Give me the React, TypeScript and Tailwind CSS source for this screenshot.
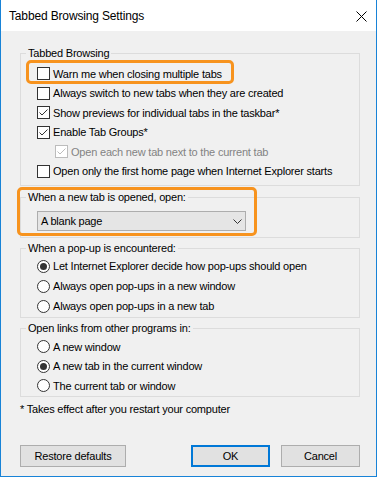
import React from "react";

type Item = { label: string; checked?: boolean; disabled?: boolean; indent?: boolean };

const tabItems: Item[] = [
  { label: "Warn me when closing multiple tabs" },
  { label: "Always switch to new tabs when they are created" },
  { label: "Show previews for individual tabs in the taskbar*", checked: true },
  { label: "Enable Tab Groups*", checked: true },
  { label: "Open each new tab next to the current tab", checked: true, disabled: true, indent: true },
  { label: "Open only the first home page when Internet Explorer starts" },
];

const popupItems: Item[] = [
  { label: "Let Internet Explorer decide how pop-ups should open", checked: true },
  { label: "Always open pop-ups in a new window" },
  { label: "Always open pop-ups in a new tab" },
];

const linkItems: Item[] = [
  { label: "A new window" },
  { label: "A new tab in the current window", checked: true },
  { label: "The current tab or window" },
];

function Checkbox({ checked, disabled }: { checked?: boolean; disabled?: boolean }) {
  return (
    <span
      className={`flex h-[13px] w-[13px] shrink-0 items-center justify-center border bg-white ${
        disabled ? "border-[#bcbcbc]" : "border-[#333333]"
      }`}
    >
      {checked && (
        <svg width="11" height="11" viewBox="0 0 11 11">
          <polyline
            points="1.5,5.5 4,8 9.5,2.5"
            fill="none"
            stroke={disabled ? "#bcbcbc" : "#333333"}
            strokeWidth="1"
          />
        </svg>
      )}
    </span>
  );
}

function Radio({ checked }: { checked?: boolean }) {
  return (
    <span className="flex h-[13px] w-[13px] shrink-0 items-center justify-center rounded-full border border-[#333333] bg-white">
      {checked && <span className="h-[7px] w-[7px] rounded-full bg-[#333333]" />}
    </span>
  );
}

// group box like the win32 one: legend sits on the top border
function Group({ title, children, className }: { title: string; children: React.ReactNode; className?: string }) {
  return (
    <fieldset className={`border border-[#dcdcdc] ${className ?? ""}`}>
      <legend className="ml-[5px] px-[2px] leading-[14px]">{title}</legend>
      {children}
    </fieldset>
  );
}

export default function App() {
  return (
    <div
      className="flex h-[477px] w-[377px] flex-col border-x border-b border-[#1883d7] bg-[#f0f0f0] text-[11px] tracking-[-0.2px] text-black"
      style={{ fontFamily: '"Liberation Sans", Arial, sans-serif' }}
    >
      {/* title bar */}
      <div className="flex h-[31px] shrink-0 items-center justify-between bg-white pl-[8px] pr-[9px] pt-[1px]">
        <span className="text-[12px] tracking-[-0.15px]">Tabbed Browsing Settings</span>
        <svg width="11" height="11" viewBox="0 0 11 11">
          <path d="M0.5 0.5 L10.5 10.5 M10.5 0.5 L0.5 10.5" stroke="#000" strokeWidth="1" />
        </svg>
      </div>

      <div className="flex flex-1 flex-col pl-[19px] pr-[16px] pt-[15px] pb-[9px]">
        <div className="relative">
          <Group title="Tabbed Browsing">
            <div className="pl-[16px] pt-[4px] pb-[4px]">
              {tabItems.map((it) => (
                <div
                  key={it.label}
                  className={`flex h-[19.5px] items-center gap-[3px] ${it.indent ? "pl-[18px]" : ""} ${
                    it.disabled ? "text-[#838383]" : ""
                  }`}
                >
                  <Checkbox checked={it.checked} disabled={it.disabled} />
                  <span className="leading-[14px] whitespace-nowrap">{it.label}</span>
                </div>
              ))}
            </div>
          </Group>
          <span className="pointer-events-none absolute left-[6px] top-[14px] h-[24px] w-[208px] rounded-[5px] border-[3px] border-[#f7931e]" />
        </div>

        <div className="relative mt-[4px]">
          <Group title="When a new tab is opened, open:">
            <div className="pl-[16px] pt-[7px] pb-[6px]">
              <div className="flex h-[20px] w-[209px] items-center justify-between border border-[#adadad] bg-[#e5e5e5] pl-[3px] pr-[3px]">
                <span className="leading-[14px]">A blank page</span>
                <svg width="9" height="5" viewBox="0 0 9 5">
                  <polyline points="0.5,0.5 4.5,4.5 8.5,0.5" fill="none" stroke="#333333" strokeWidth="1" />
                </svg>
              </div>
            </div>
          </Group>
          <span className="pointer-events-none absolute -left-[3px] -top-[3px] h-[49px] w-[240px] rounded-[5px] border-[3px] border-[#f7931e]" />
        </div>

        <Group title="When a pop-up is encountered:" className="mt-[3px]">
          <div className="pl-[16px] pt-[1px] pb-[1px]">
            {popupItems.map((it) => (
              <div key={it.label} className="flex h-[20px] items-center gap-[3px]">
                <Radio checked={it.checked} />
                <span className="leading-[14px] whitespace-nowrap">{it.label}</span>
              </div>
            ))}
          </div>
        </Group>

        <Group title="Open links from other programs in:" className="mt-[3px]">
          <div className="pl-[16px] pt-[2px]">
            {linkItems.map((it) => (
              <div key={it.label} className="flex h-[19.5px] items-center gap-[3px]">
                <Radio checked={it.checked} />
                <span className="leading-[14px] whitespace-nowrap">{it.label}</span>
              </div>
            ))}
          </div>
        </Group>

        <p className="mt-[5px] leading-[14px]">* Takes effect after you restart your computer</p>

        <div className="mt-auto flex items-center">
          <button className="h-[22px] w-[106px] border border-[#adadad] bg-[#e1e1e1] leading-[14px]">
            Restore defaults
          </button>
          <button className="ml-auto h-[22px] w-[79px] border-2 border-[#0078d7] bg-[#e1e1e1] leading-[14px]">
            OK
          </button>
          <button className="ml-[11px] h-[22px] w-[79px] border border-[#adadad] bg-[#e1e1e1] leading-[14px]">
            Cancel
          </button>
        </div>
      </div>
    </div>
  );
}
